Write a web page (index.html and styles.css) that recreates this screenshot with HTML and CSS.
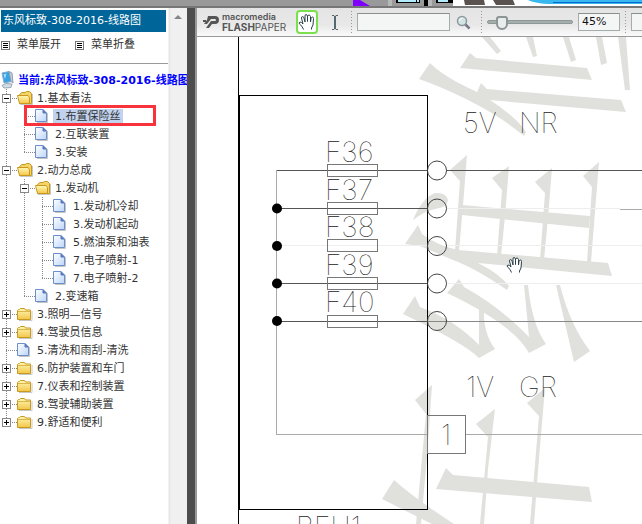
FILE: index.html
```
<!DOCTYPE html>
<html lang="zh-CN">
<head>
    <meta charset="UTF-8">
    <title>东风标致-308-2016-线路图</title>
    <link rel="stylesheet" href="styles.css">
</head>
<body>
    <svg class="defs" width="0" height="0" aria-hidden="true">
        <linearGradient id="gold" x1="0" y1="0" x2="0" y2="1">
            <stop offset="0" stop-color="#fff8b8"/>
            <stop offset="1" stop-color="#f2c648"/>
        </linearGradient>
        <linearGradient id="sheet" x1="0" y1="0" x2="1" y2="1">
            <stop offset="0" stop-color="#ffffff"/>
            <stop offset="1" stop-color="#bcd6fa"/>
        </linearGradient>
        <symbol id="folder" viewBox="0 0 16 16">
            <path d="M2 14.500h13V5" fill="none" stroke="#c8c8c8"/>
            <path d="M.5 4.500l1-1h1l1-1h4l1 1.500h5v9.500H.5z" fill="url(#gold)" stroke="#c9991f"/>
            <path d="M1 5.500h12.500" stroke="#e0b64c"/>
        </symbol>
        <symbol id="folder-open" viewBox="0 0 16 16">
            <path d="M3 14.500h12.500V4" fill="none" stroke="#c8c8c8"/>
            <path d="M2.500 12V4.500L5 2.500h3l1.500-1h3l2 2v10h-12z" fill="#f4d468" stroke="#c9991f"/>
            <path d="M.5 5.500h10.500l1.500 2v6H2.500z" fill="url(#gold)" stroke="#c9991f"/>
        </symbol>
        <symbol id="file" viewBox="0 0 16 16">
            <path d="M2 14.500h10.500V5" fill="none" stroke="#c4c4c4"/>
            <path d="M.5 1.500h7l4 4v8H.5z" fill="url(#sheet)" stroke="#6c8fcb"/>
            <path d="M8 1.500v3.500h3.500z" fill="#5f86cc" stroke="#5577b8"/>
        </symbol>
    </svg>

    <div class="banner">
        <svg width="289" height="7" viewBox="353 0 289 7">
            <path d="M353 0h7l10 6h-17z" fill="#8000ff"/>
            <path d="M388 0h4v6h-4zM428 0h4v6h-4z" fill="#b8b8b8"/>
            <path d="M396 0h24v3h-24zM424 0h4v6h-4zM436 0h17v3h-17z" fill="#000"/>
            <path d="M398 0h18v2h-18zM417 0h2v2h-2zM438 0h10v2h-10z" fill="#b4ecff"/>
            <path d="M453 0h189v6H453z" fill="#fff"/>
            <path d="M464 0h20l1 5h-20zM493 0h20l2 5h-19z" fill="#5a524e"/>
            <path d="M528 0h114v4H548q-14-1-20-4z" fill="#38b8ee"/>
            <path d="M553 2.500h89" stroke="#0a68d0"/>
        </svg>
    </div>

    <div class="main">
        <aside class="sidebar">
            <h1 class="title">东风标致-308-2016-线路图</h1>
            <div class="menu">
                <button type="button" class="menu-btn"><span class="menu-icon"></span>菜单展开</button>
                <button type="button" class="menu-btn"><span class="menu-icon"></span>菜单折叠</button>
            </div>
            <nav>
                <div class="root">
                    <svg width="16" height="18" viewBox="0 0 16 18">
                        <path d="M2 2l7-1.500 2.500 10L4 12z" fill="#39a3e8" stroke="#8ca9c8"/>
                        <path d="M9 .5l3 1.500 1 10-2-1.500z" fill="#c8d4e0" stroke="#8c9cb0"/>
                        <path d="M3.500 3.500l3-.8L5 8z" fill="#a8e2fc"/>
                        <path d="M2 14.500l4-2 6 .5-1 3.500-7 .5z" fill="#d4dce6" stroke="#98a8b8"/>
                    </svg>
                    <a href="#">当前:东风标致-308-2016-线路图</a>
                </div>
                <ul class="tree">
                    <li>
                        <div class="row"><button type="button" class="toggle open" aria-label="折叠"></button><svg class="icon"><use href="#folder-open"/></svg><a href="#">1.基本看法</a></div>
                        <ul>
                            <li class="marked"><div class="row leaf"><svg class="icon"><use href="#file"/></svg><a href="#" class="selected">1.布置保险丝</a></div></li>
                            <li><div class="row leaf"><svg class="icon"><use href="#file"/></svg><a href="#">2.互联装置</a></div></li>
                            <li><div class="row leaf"><svg class="icon"><use href="#file"/></svg><a href="#">3.安装</a></div></li>
                        </ul>
                    </li>
                    <li>
                        <div class="row"><button type="button" class="toggle open" aria-label="折叠"></button><svg class="icon"><use href="#folder-open"/></svg><a href="#">2.动力总成</a></div>
                        <ul>
                            <li>
                                <div class="row"><button type="button" class="toggle open" aria-label="折叠"></button><svg class="icon"><use href="#folder-open"/></svg><a href="#">1.发动机</a></div>
                                <ul>
                                    <li><div class="row leaf"><svg class="icon"><use href="#file"/></svg><a href="#">1.发动机冷却</a></div></li>
                                    <li><div class="row leaf"><svg class="icon"><use href="#file"/></svg><a href="#">3.发动机起动</a></div></li>
                                    <li><div class="row leaf"><svg class="icon"><use href="#file"/></svg><a href="#">5.燃油泵和油表</a></div></li>
                                    <li><div class="row leaf"><svg class="icon"><use href="#file"/></svg><a href="#">7.电子喷射-1</a></div></li>
                                    <li><div class="row leaf"><svg class="icon"><use href="#file"/></svg><a href="#">7.电子喷射-2</a></div></li>
                                </ul>
                            </li>
                            <li><div class="row leaf"><svg class="icon"><use href="#file"/></svg><a href="#">2.变速箱</a></div></li>
                        </ul>
                    </li>
                    <li><div class="row"><button type="button" class="toggle" aria-label="展开"></button><svg class="icon"><use href="#folder"/></svg><a href="#">3.照明—信号</a></div></li>
                    <li><div class="row"><button type="button" class="toggle" aria-label="展开"></button><svg class="icon"><use href="#folder"/></svg><a href="#">4.驾驶员信息</a></div></li>
                    <li><div class="row leaf"><svg class="icon"><use href="#file"/></svg><a href="#">5.清洗和雨刮-清洗</a></div></li>
                    <li><div class="row"><button type="button" class="toggle" aria-label="展开"></button><svg class="icon"><use href="#folder"/></svg><a href="#">6.防护装置和车门</a></div></li>
                    <li><div class="row"><button type="button" class="toggle" aria-label="展开"></button><svg class="icon"><use href="#folder"/></svg><a href="#">7.仪表和控制装置</a></div></li>
                    <li><div class="row"><button type="button" class="toggle" aria-label="展开"></button><svg class="icon"><use href="#folder"/></svg><a href="#">8.驾驶辅助装置</a></div></li>
                    <li><div class="row"><button type="button" class="toggle" aria-label="展开"></button><svg class="icon"><use href="#folder"/></svg><a href="#">9.舒适和便利</a></div></li>
                </ul>
            </nav>
            <svg class="scroll-up" width="8" height="5" viewBox="0 0 8 5"><path d="M0 5l4-4 4 4z" fill="#868686"/></svg>
        </aside>

        <section class="viewer">
            <div class="toolbar">
                <div class="logo">
                    <svg width="17" height="16" viewBox="0 0 17 16">
                        <path d="M5 2h7q4 0 4 4t-4 4H9l-3 4H3l5-7h4q1 0 1-1t-1-1H8L4 10H1l3-4z" fill="#555"/>
                        <path d="M0 6h3v2H0z" fill="#555"/>
                    </svg>
                    <div class="logo-text">
                        <div class="logo-top">macromedia</div>
                        <div class="logo-name"><b>FLASH</b>PAPER</div>
                    </div>
                </div>
                <button type="button" class="tool active" aria-label="Hand">
                    <svg width="18" height="18" viewBox="0 0 18 18"><path d="M5.500 16.500Q4.500 13 1.500 11 .5 9.500 2 9q1.500 0 3 2L3.500 5q0-1.500 1-1.500T6 5l1 4V3q0-1.500 1-1.500T9.500 3v5.500V3.500q.5-1.500 1.500-1.500t1.500 1.500V9L13 5.500q.5-1.500 1.500-1.500t1 1.500L15 12l-1.500 3v1.500" fill="#fff" stroke="#2c4048"/></svg>
                </button>
                <button type="button" class="tool text-tool" aria-label="Select">
                    <svg width="8" height="15" viewBox="0 0 8 15"><path d="M1 .5h2l1 1 1-1h2M1 14.500h2l1-1 1 1h2" fill="none" stroke="#536870"/><path d="M4 1v13" stroke="#536870" stroke-width="2"/></svg>
                </button>
                <span class="sep"></span>
                <input type="text" class="field search" aria-label="Search">
                <button type="button" class="tool find" aria-label="Find">
                    <svg width="15" height="15" viewBox="0 0 15 15"><path d="M9 9l4.500 4.500" stroke="#778" stroke-width="2.500"/><circle cx="6" cy="6" r="4.500" fill="#d3e4e4" stroke="#8c999c" stroke-width="1.500"/><path d="M3.500 6q0-2.500 3-3" fill="none" stroke="#fff"/></svg>
                </button>
                <span class="sep"></span>
                <input type="range" class="zoom" min="0" max="100" value="11" aria-label="Zoom">
                <input type="text" class="field percent" value="45%" aria-label="Zoom level">
                <span class="sep"></span>
                <input type="text" class="field page" aria-label="Page">
            </div>

            <div class="paper">
                <svg width="445" height="487" viewBox="197 37 445 487">
                    <!-- watermark -->
                    <g fill="#e0e1dd">
                        <path d="M482 37h8l11 14-4 3zM526 37h7l4 19-4 1zM563 37h6l7 23-5 2zM596 37h6l5 26-6 2zM618 37h8l4 53h-5z"/>
                        <path d="M470 53l6 5 111 10 5 12-132-12z"/>
                        <path d="M481 83l6 6 134 11 5 12-137-12-15-1z"/>
                        <path d="M430 63q14 14 45 28l15 9q26 17 36 32l-2 4q-34-29-94-53l-11-4z"/>
                        <path d="M467 155l-4 50-4 46h-4l5-70-10-11z"/>
                        <path d="M509 166l-4 50-4 40h-4l5-66-10-12z"/>
                        <path d="M552 168l-4 50-4 42h-4l5-67-10-11z"/>
                        <path d="M599 162l-4 50-4 50h-4l5-75-9-11z"/>
                        <path d="M462 205l128 11-1 12-127-13z"/>
                        <path d="M413 220q9-22 22-27 11-1 13 7 0 7-13 9-10 2-22 11z"/>
                        <path d="M418 225l4 9q14 11 36 16l150 13 4 13-134-13q22 11 31 23l-2 4q-32-22-54-30l-33-14-15-2z"/>
                        <path d="M415 296l5 11q35 13 59 38V309h5q-1 24 11 40l-16 9q-15-15-76-44z"/>
                        <path d="M459 279l5 8q35 19 65 50l-5-52h4q4 40 18 59l-17 9q-15-28-82-60z"/>
                        <path d="M556 285h4q10 40 30 66l-16 11z"/>
                    </g>
                    <g fill="#e0e1dd">
                        <path d="M432 385l-5 72-6 67h-5l10-110-11-14z"/>
                        <path d="M495 409l-7 60-4 55h-4l8-87-12-13z"/>
                        <path d="M545 388l-6 70-5 66h-4l9-108-12-13z"/>
                        <path d="M446 468l7 7 136 12 3 15-156-13z"/>
                        <path d="M394 480q20 18 60 44h-22l-50-25z"/>
                    </g>

                    <!-- housing -->
                    <g fill="none" stroke="#000" shape-rendering="crispEdges">
                        <path d="M238.500 37v487"/>
                        <path d="M239.500 95.500h188v414h-188z"/>
                    </g>

                    <!-- wires -->
                    <g fill="none" stroke="#555" shape-rendering="crispEdges">
                        <path d="M446 208.500h174M277 245.500h150M446 245.500h196M446 283.500h196" stroke="#eee"/>
                        <path d="M277 170.500h150M446 170.500h196"/>
                        <path d="M277 208.500h150M277 283.500h150M277 321.500h150"/>
                        <path d="M427 321.500h215" stroke="#888"/>
                        <path d="M620 209.500h22M276.500 170v264M276 434.500h151M466 434.500h176" stroke="#aaa"/>
                        <path d="M327.500 164.500h50v12h-50zM327.500 202.500h50v12h-50zM327.500 239.500h50v12h-50zM327.500 277.500h50v12h-50zM327.500 315.500h50v12h-50z" stroke="#777"/>
                        <path d="M427.500 415.500h38v38h-38z" stroke="#777"/>
                    </g>
                    <g fill="none" stroke="#444">
                        <circle cx="437" cy="170.500" r="9.500"/>
                        <circle cx="437" cy="208.500" r="9.500"/>
                        <circle cx="437" cy="246" r="9.500"/>
                        <circle cx="437" cy="283.500" r="9.500"/>
                        <circle cx="437" cy="321" r="9.500"/>
                    </g>
                    <circle cx="277" cy="208.500" r="5"/>
                    <circle cx="277" cy="246" r="5"/>
                    <circle cx="277" cy="283.500" r="5"/>
                    <circle cx="277" cy="321" r="5"/>

                    <g class="label">
                        <text x="325" y="162">F36</text>
                        <text x="325" y="200">F37</text>
                        <text x="325" y="237">F38</text>
                        <text x="325" y="275">F39</text>
                        <text x="325" y="312">F40</text>
                        <text x="463" y="133">5V</text>
                        <text x="519" y="133">NR</text>
                        <text x="466" y="397">1V</text>
                        <text x="519" y="397">GR</text>
                        <text x="441" y="445">1</text>
                        <text x="296" y="537">BFH1</text>
                    </g>

                    <path transform="translate(506 256)" d="M5.500 16.500Q4.500 13 1.500 11 .5 9.500 2 9q1.500 0 3 2L3.500 5q0-1.500 1-1.500T6 5l1 4V3q0-1.500 1-1.500T9.500 3v5.500V3.500q.5-1.500 1.500-1.500t1.500 1.500V9L13 5.500q.5-1.500 1.500-1.500t1 1.500L15 12l-1.500 3v1.500" fill="#fff" stroke="#2c4048"/>
                </svg>
            </div>
        </section>
    </div>
</body>
</html>
```

FILE: styles.css
```
body {
    margin: 0;
    height: 100vh;
    display: flex;
    flex-direction: column;
    overflow: hidden;
    background-color: #fff;
    color: #333;
    font: 11px/18px "DejaVu Sans", "Noto Sans CJK SC", sans-serif;
}
svg {
    display: block;
    flex: none;
}
a {
    color: #333;
    text-decoration: none;
}
button {
    padding: 0;
    border: none;
    background: none;
    color: inherit;
    font: inherit;
}
input {
    margin: 0;
    box-sizing: border-box;
}
.defs {
    position: absolute;
}
.banner {
    height: 6px;
    display: flex;
    justify-content: flex-end;
    overflow: hidden;
    flex: none;
    background-color: #999;
    border-bottom: 2px solid #777;
}
.main {
    flex: 1;
    display: flex;
    min-height: 0;
}

/* left menu */
.sidebar {
    position: relative;
    width: 187px;
    flex: none;
    overflow: hidden;
    background: linear-gradient(to right, #fff 168px, #e4e4e4 169px, #f0f0f0 171px);
    border-right: 8px solid #4d4d4d;
}
.title {
    margin: 2px 21px 0 1px;
    padding: 0 2px;
    height: 22px;
    line-height: 22px;
    background-color: #006699;
    color: #fff;
    font-size: 11px;
    font-weight: normal;
    white-space: nowrap;
}
.menu {
    display: flex;
    align-items: flex-start;
    gap: 14px;
    height: 31px;
    margin-right: 19px;
    padding-left: 1px;
    border-bottom: 1px solid #999;
}
.menu-btn {
    display: flex;
    align-items: center;
    gap: 7px;
    height: 26px;
}
.menu-icon {
    width: 5px;
    height: 5px;
    padding: 1px;
    border: 1px solid #777;
    background: repeating-linear-gradient(#000 0 1px, #fff 1px 2px) content-box;
}
.root {
    display: flex;
    height: 18px;
    gap: 2px;
    margin-top: 7px;
    white-space: nowrap;
    font-weight: bold;
}
.root a {
    color: #0000ff;
    line-height: 20px;
}
.scroll-up {
    position: absolute;
    right: 5px;
    top: 6px;
}
.tree, .tree ul {
    list-style: none;
    margin: 0;
    padding: 0;
}
.tree ul {
    padding-left: 18px;
}
.tree li {
    background: repeating-linear-gradient(#888 0 1px, transparent 1px 2px) 6px 0 / 1px 100% no-repeat;
}
.tree li:last-child {
    background-size: 1px 9px;
}
.row {
    display: flex;
    align-items: center;
    height: 18px;
    padding-left: 2px;
    white-space: nowrap;
    background: repeating-linear-gradient(to right, #888 0 1px, transparent 1px 2px) 6px 9px / 11px 1px no-repeat;
}
.row a {
    padding: 0 2px;
    line-height: 16px;
    margin-top: 2px;
}
.row .selected {
    background-color: #c1d2ee;
}
.leaf {
    padding-left: 17px;
}
.toggle {
    width: 9px;
    height: 9px;
    margin-right: 6px;
    border: 1px solid #888;
    background:
        linear-gradient(#000, #000) center / 5px 1px no-repeat,
        linear-gradient(#000, #000) center / 1px 5px no-repeat,
        #fff;
}
.toggle.open {
    background: linear-gradient(#000, #000) center / 5px 1px no-repeat, #fff;
}
.icon {
    width: 16px;
    height: 16px;
    margin-right: 2px;
}
.marked {
    position: relative;
}
.marked::after {
    content: "";
    position: absolute;
    left: 6px;
    top: -2px;
    width: 126px;
    height: 15px;
    border: 3px solid #f8333c;
}

/* viewer */
.viewer {
    flex: 1;
    min-width: 0;
    display: flex;
    flex-direction: column;
    border-left: 2px solid #999;
}
.toolbar {
    display: flex;
    align-items: center;
    height: 28px;
    flex: none;
    overflow: hidden;
    padding-left: 6px;
    border-bottom: 1px solid #999;
    background: linear-gradient(#e4e4e4, #e8e8e8 60%, #fafafa);
}
.logo {
    display: flex;
    align-items: center;
    gap: 2px;
    width: 93px;
    flex: none;
    color: #555;
}
.logo-text {
    font: 10px/10px Inter, sans-serif;
}
.logo-top {
    font-size: 9px;
    font-weight: 600;
}
.tool {
    display: flex;
    align-items: center;
    justify-content: center;
    flex: none;
}
.active {
    width: 22px;
    height: 24px;
    box-sizing: border-box;
    border: 2px solid #7be04e;
    border-radius: 4px;
    background-color: #fff;
}
.text-tool {
    width: 33px;
}
.sep {
    width: 1px;
    height: 22px;
    flex: none;
    background: repeating-linear-gradient(#999 0 1px, transparent 1px 3px);
}
.field {
    height: 18px;
    flex: none;
    margin: 0 5px;
    padding: 0 3px;
    border: 1px solid #a4acac;
    border-top-color: #889090;
    background-color: #f4f6f6;
    color: #111;
    font: inherit;
}
.search {
    width: 93px;
}
.find {
    width: 17px;
    margin-right: 9px;
}
.zoom {
    appearance: none;
    width: 86px;
    height: 18px;
    flex: none;
    margin-left: 5px;
    background: none;
}
.zoom::-webkit-slider-runnable-track {
    height: 4px;
    border: 1px solid #8c9896;
    border-radius: 2px;
    background-color: #a4aeac;
    box-sizing: border-box;
}
.zoom::-webkit-slider-thumb {
    appearance: none;
    width: 12px;
    height: 14px;
    margin-top: -5px;
    border: 2px solid #8c9494;
    border-radius: 3px 3px 6px 6px;
    background-color: #e8ecec;
    box-sizing: border-box;
}
.percent {
    width: 42px;
}
.page {
    flex: 1;
    min-width: 40px;
}
.active {
    margin-left: 0;
}
.paper {
    flex: 1;
    min-height: 0;
    overflow: hidden;
    background-color: #fff;
}
.label text {
    font: 100 28px Inter, "Open Sans", sans-serif;
    fill: #222;
}
```
